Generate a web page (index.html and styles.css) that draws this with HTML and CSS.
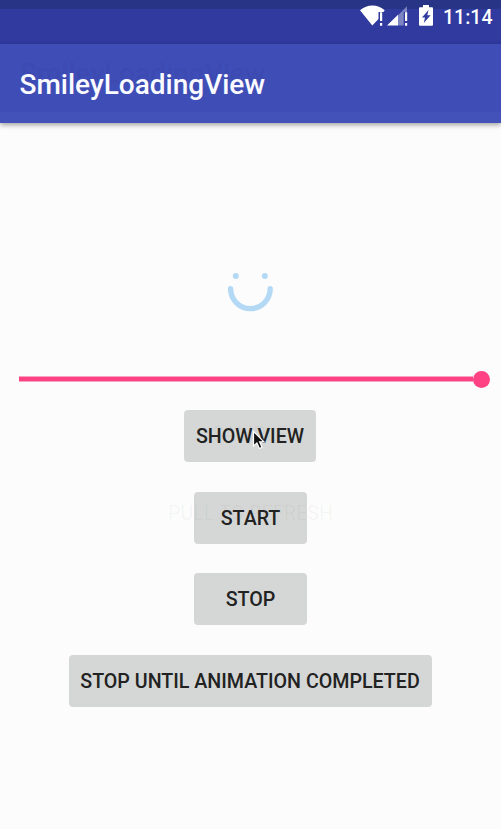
FILE: index.html
```html
<!DOCTYPE html>
<html lang="en">
<head>
<meta charset="utf-8">
<title>SmileyLoadingView</title>
<link rel="stylesheet" href="styles.css">
</head>
<body>
<div class="status-bar">
  <svg class="status-icons" width="76" height="24" viewBox="359 4 76 24">
    <path fill="#fff" d="M360 10.3C367 3.8 378 3.8 384.7 10.3L383.5 12H378.5V19L372.3 25.6Z"/>
    <path fill="#fff" d="M380 12.3h2.2v8.7H380zM380 23h2.2v2.7H380z"/>
    <path fill="#fff" fill-opacity=".38" d="M398 15.3L407 6.3V12H403.7V25.6H398z"/>
    <path fill="#fff" d="M387 25.6L398 14.8V25.6zM405 12.3h2.2v8.7H405zM405 23h2.2v2.7H405z"/>
    <path fill="#fff" fill-rule="evenodd" d="M423 5h6v2.2h3q1 0 1 1V24.7q0 1-1 1H420q-1 0-1-1V8.2q0-1 1-1h3zM428.5 10L422 17.5H425L423.8 23L430.6 15.3H427.3z"/>
  </svg>
  <span class="clock">11:14</span>
</div>
<header class="app-bar">
  <h1 class="title">SmileyLoadingView</h1>
  <span class="title-ghost" aria-hidden="true">SmileyLoadingView</span>
</header>
<main class="content">
  <svg class="smiley" width="50" height="44" viewBox="225 270 50 44">
    <circle cx="235.8" cy="275.9" r="3" fill="#b3d9f5"/>
    <circle cx="264.8" cy="275.9" r="3" fill="#b3d9f5"/>
    <path d="M230.6 288.8A19.8 19.8 0 0 0 270.2 288.8" fill="none" stroke="#b3d9f5" stroke-width="5.4" stroke-linecap="round"/>
  </svg>
  <div class="slider"><div class="track"></div><div class="thumb"></div></div>
  <div class="actions">
    <button class="btn show"><span>SHOW VIEW</span><i class="ghost sample" aria-hidden="true">SAMPLE</i>
      <svg class="cursor" width="14" height="22" viewBox="0 0 14 22"><path d="M1.5 1.5V16L4.9 12.9L7.4 18.5L10 17.3L7.6 11.9H12z" fill="#111" stroke="#fff" stroke-width="1.2"/></svg>
    </button>
    <button class="btn start"><span>START</span><i class="ghost refresh" aria-hidden="true">PULL TO REFRESH</i></button>
    <button class="btn stop"><span>STOP</span></button>
    <button class="btn complete"><span>STOP UNTIL ANIMATION COMPLETED</span></button>
  </div>
</main>
</body>
</html>
```
FILE: styles.css
```css
* { box-sizing: border-box; }
body {
  margin: 0;
  height: 829px;
  overflow: hidden;
  background: #fcfcfc;
  font-family: Roboto, "Liberation Sans", sans-serif;
}
.status-bar {
  height: 44px;
  padding: 4px 8px 0 0;
  display: flex;
  justify-content: flex-end;
  gap: 8px;
  background: linear-gradient(#283587 9px, #303a9f 9px);
}
.clock {
  width: 50px;
  color: #fff;
  font-size: 19.5px;
  font-weight: 500;
  line-height: 27px;
  white-space: nowrap;
}
.app-bar {
  position: relative;
  height: 79px;
  padding-left: 19.5px;
  display: flex;
  align-items: center;
  background: linear-gradient(#3f4eb7 68px, #4352b8 68px);
  box-shadow: 0 2px 5px rgba(0, 0, 0, .36);
}
.title, .title-ghost {
  margin: 0;
  font-size: 28px;
  font-weight: 500;
  line-height: 36px;
  white-space: nowrap;
}
.title { position: relative; z-index: 1; top: 1px; color: #fafaff; }
.title-ghost { position: absolute; left: 20px; top: 12px; color: #3c4ab1; }
.content {
  padding: 147px 1px 0 0;
  display: flex;
  flex-direction: column;
  align-items: center;
}
.smiley { display: block; }
.slider {
  align-self: stretch;
  margin: 56px 10px 0 19px;
  height: 18px;
  display: flex;
  align-items: center;
}
.track {
  flex: 1;
  height: 6px;
  background: linear-gradient(#f9a3c1 1px, #ff4283 1px 5px, #f9a3c1 5px);
}
.thumb { width: 17px; height: 17px; border-radius: 50%; background: #ff4283; }
.actions {
  margin-top: 22px;
  display: flex;
  flex-direction: column;
  align-items: center;
  gap: 29.7px;
}
.btn {
  position: relative;
  height: 52px;
  padding: 0;
  border: 0;
  border-radius: 4px;
  background: #d5d7d6;
  color: #222;
  font: 500 19.65px/52px Roboto, "Liberation Sans", sans-serif;
  white-space: nowrap;
}
.show { width: 132px; }
.start, .stop { width: 113px; left: .5px; }
.complete { width: 363px; }
.btn > span { position: relative; z-index: 1; top: 1px; }
.ghost {
  position: absolute;
  font-style: normal;
  font-weight: 400;
  line-height: 24px;
  color: rgba(0, 0, 0, .04);
}
.sample { left: 28px; top: 13px; }
.refresh { left: -26px; top: 10px; letter-spacing: .1px; }
.cursor { position: absolute; z-index: 2; left: 68px; top: 20px; }
```
